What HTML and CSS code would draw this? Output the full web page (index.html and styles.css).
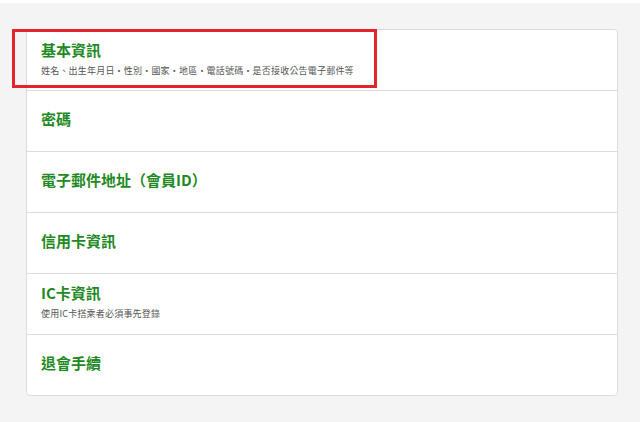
FILE: index.html
```html
<!DOCTYPE html>
<html lang="zh-Hant">

<head>
    <meta charset="UTF-8">
    <meta name="viewport" content="width=device-width, initial-scale=1.0">
    <title>會員資料</title>
    <link rel="stylesheet" href="styles.css">
</head>

<body>

    <div class="topbar"></div>

    <main class="page">
        <ul class="menu">
            <li class="menu-item">
                <a href="#" class="menu-title">基本資訊</a>
                <span class="menu-note">姓名、出生年月日・性別・國家・地區・電話號碼・是否接收公告電子郵件等</span>
            </li>
            <li class="menu-item">
                <a href="#" class="menu-title">密碼</a>
            </li>
            <li class="menu-item">
                <a href="#" class="menu-title">電子郵件地址（會員ID）</a>
            </li>
            <li class="menu-item">
                <a href="#" class="menu-title">信用卡資訊</a>
            </li>
            <li class="menu-item">
                <a href="#" class="menu-title">IC卡資訊</a>
                <span class="menu-note">使用IC卡搭乘者必須事先登錄</span>
            </li>
            <li class="menu-item">
                <a href="#" class="menu-title">退會手續</a>
            </li>
        </ul>

        <div class="highlight"></div>
    </main>

</body>

</html>
```

FILE: styles.css
```css
* {
    margin: 0;
    padding: 0;
    box-sizing: border-box;
}

body {
    font-family: "Noto Sans CJK TC", "Noto Sans", sans-serif;
    background-color: #f4f4f4;
    color: #333;
}

.topbar {
    height: 3px;
    background-color: #fff;
}

.page {
    position: relative;
    padding: 26px 22px 0 26px;
}

.menu {
    list-style: none;
    background-color: #fff;
    border: 1px solid #dcdcdc;
    border-radius: 4px;
}

.menu-item {
    display: flex;
    flex-direction: column;
    justify-content: center;
    height: 61px;
    padding: 0 15px 5px 14px;
    border-top: 1px solid #dcdcdc;
}

.menu-item:first-child {
    border-top: none;
    height: 60px;
    padding-bottom: 3px;
}

.menu-title {
    font-size: 15px;
    font-weight: bold;
    line-height: 23px;
    color: #1f8a24;
    text-decoration: none;
}

.menu-note {
    font-size: 9px;
    letter-spacing: 0.2px;
    line-height: 19px;
    color: #555;
}

.highlight {
    position: absolute;
    left: 12px;
    top: 26px;
    width: 365px;
    height: 59px;
    border: 3px solid #e3242c;
}
```
